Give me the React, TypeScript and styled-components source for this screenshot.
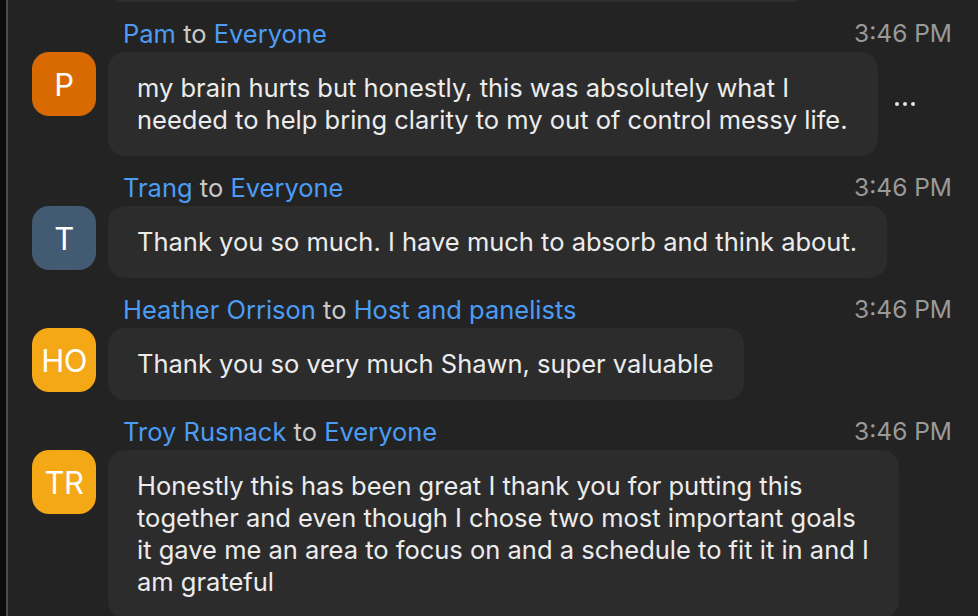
import React from 'react';
import styled, { createGlobalStyle } from 'styled-components';

const GlobalStyle = createGlobalStyle`
    html, body {
        margin: 0;
        padding: 0;
        background: #232323;
    }
    body {
        font-family: Inter, 'Noto Sans', 'Liberation Sans', sans-serif;
        -webkit-font-smoothing: antialiased;
    }
`;

const Page = styled.div`
    display: flex;
    height: 616px;
    overflow: hidden;
    background: #232323;
`;

const Rail = styled.div`
    width: 6px;
    flex-shrink: 0;
    background: #0b0b0b;
    border-right: 2px solid #4a4a4a;
`;

const Chat = styled.div`
    flex: 1;
    padding: 0 26px 0 24px;
`;

const PrevTail = styled.div`
    margin-left: 84px;
    width: 682px;
    height: 2px;
    background: #2c2c2c;
    border-radius: 0 0 8px 8px;
`;

const Message = styled.div`
    display: grid;
    grid-template-columns: 64px 1fr;
    column-gap: 12px;
    margin-top: 16px;
`;

const Header = styled.div`
    grid-column: 2;
    display: flex;
    justify-content: space-between;
    align-items: center;
    height: 30px;
    margin-bottom: 4px;
    padding-left: 15px;
    font-size: 25.5px;
`;

const Who = styled.span`
    color: #c9c9c9;
`;

const Name = styled.span`
    color: #4b9cf5;
`;

const Time = styled.span`
    color: #9a9a9a;
    font-size: 24.5px;
`;

const Avatar = styled.div<{ $bg: string }>`
    grid-column: 1;
    width: 64px;
    height: 64px;
    border-radius: 17px;
    background: ${(p) => p.$bg};
    color: #ffffff;
    display: flex;
    align-items: center;
    justify-content: center;
    font-size: 31px;
    letter-spacing: -0.5px;
`;

const BodyRow = styled.div`
    grid-column: 2;
    display: flex;
    align-items: center;
    gap: 17px;
`;

const Bubble = styled.div`
    background: #2c2c2c;
    border-radius: 17px;
    padding: 20px 30px 20px 29px;
    color: #ececec;
    font-size: 25.5px;
    line-height: 32px;
    white-space: pre;
`;

const Dots = styled.div`
    display: flex;
    gap: 4px;
`;

const Dot = styled.span`
    width: 4px;
    height: 4px;
    border-radius: 50%;
    background: #e6e6e6;
`;

type Msg = {
    from: string;
    to: string;
    initials: string;
    color: string;
    text: string[];
    menu?: boolean;
};

const messages: Msg[] = [
    {
        from: 'Pam',
        to: 'Everyone',
        initials: 'P',
        color: '#d96a02',
        text: [
            'my brain hurts but honestly, this was absolutely what I',
            'needed to help bring clarity to my out of control messy life.',
        ],
        menu: true,
    },
    {
        from: 'Trang',
        to: 'Everyone',
        initials: 'T',
        color: '#425a72',
        text: ['Thank you so much. I have much to absorb and think about.'],
    },
    {
        from: 'Heather Orrison',
        to: 'Host and panelists',
        initials: 'HO',
        color: '#f5a815',
        text: ['Thank you so very much Shawn, super valuable'],
    },
    {
        from: 'Troy Rusnack',
        to: 'Everyone',
        initials: 'TR',
        color: '#f5a815',
        text: [
            'Honestly this has been great I thank you for putting this',
            'together and even though I chose two most important goals',
            'it gave me an area to focus on and a schedule to fit it in and I',
            'am grateful',
        ],
    },
];

const App = (): JSX.Element => (
    <Page>
        <GlobalStyle />
        <Rail />
        <Chat>
            <PrevTail />
            {messages.map((m, i) => (
                <Message key={i}>
                    <Header>
                        <span>
                            <Name>{m.from}</Name> <Who>to</Who> <Name>{m.to}</Name>
                        </span>
                        <Time>3:46 PM</Time>
                    </Header>
                    <Avatar $bg={m.color}>{m.initials}</Avatar>
                    <BodyRow>
                        <Bubble>{m.text.join('\n')}</Bubble>
                        {m.menu && (
                            <Dots>
                                <Dot />
                                <Dot />
                                <Dot />
                            </Dots>
                        )}
                    </BodyRow>
                </Message>
            ))}
        </Chat>
    </Page>
);

export default App;
